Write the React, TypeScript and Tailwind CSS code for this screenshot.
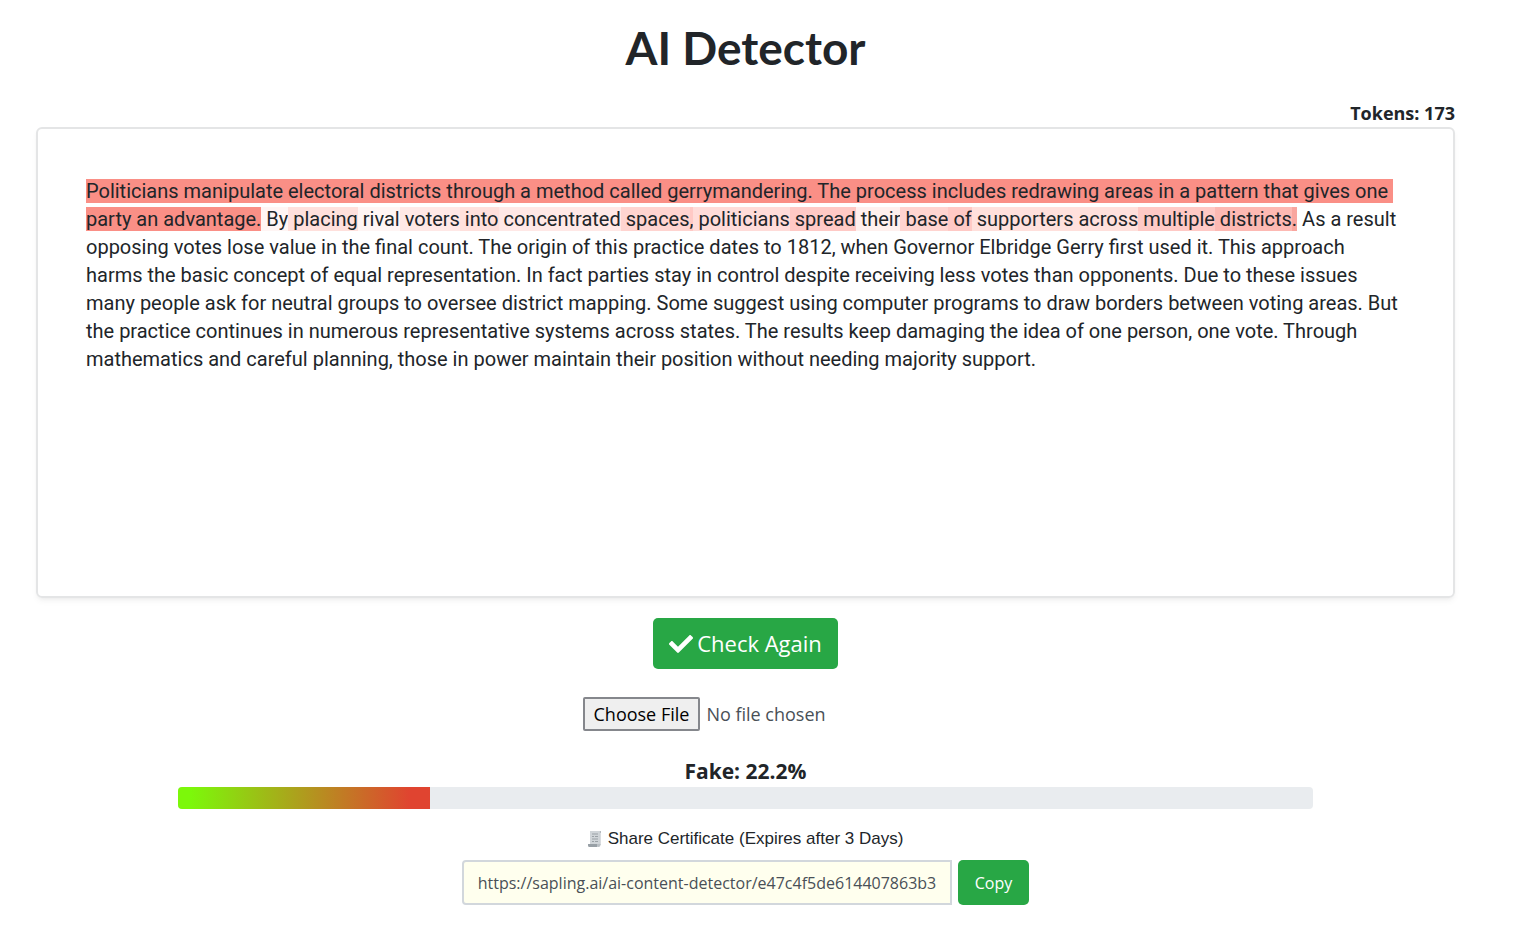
import { useState } from "react";

interface Token {
	text: string;
	className: string;
}

const TOKENS: Token[] = [
	{
		text: "Politicians manipulate electoral districts through a method called gerrymandering. The process includes redrawing areas in a pattern that gives one ",
		className: "bg-[#fa8f86]",
	},
	{ text: "party an advantage.", className: "bg-[#fa8f86]" },
	{ text: " By", className: "bg-[#fff5f4]" },
	{ text: " placing", className: "bg-[#ffe0dc]" },
	{ text: " rival", className: "bg-[#fff5f4]" },
	{ text: " voters", className: "bg-[#ffe8e6]" },
	{ text: " into", className: "bg-[#ffe0dc]" },
	{ text: " concentrated", className: "bg-[#ffe8e6]" },
	{ text: " spaces", className: "bg-[#ffd4d0]" },
	{ text: ",", className: "bg-[#ffc9c5]" },
	{ text: " politicians", className: "bg-[#ffdcd9]" },
	{ text: " spread", className: "bg-[#ffc9c5]" },
	{ text: " their", className: "bg-[#fff0ee]" },
	{ text: " base", className: "bg-[#ffd4d0]" },
	{ text: " of", className: "bg-[#ffc9c5]" },
	{ text: " supporters across", className: "bg-[#ffe0dc]" },
	{ text: " multiple", className: "bg-[#ffc9c5]" },
	{ text: " districts", className: "bg-[#fdb9b3]" },
	{ text: ".", className: "bg-[#f9a69f]" },
	{ text: " As a result ", className: "" },
	{
		text: "opposing votes lose value in the final count. The origin of this practice dates to 1812, when Governor Elbridge Gerry first used it. This approach harms the basic concept of equal representation. In fact parties stay in control despite receiving less votes than opponents. Due to these issues many people ask for neutral groups to oversee district mapping. Some suggest using computer programs to draw borders between voting areas. But the practice continues in numerous representative systems across states. The results keep damaging the idea of one person, one vote. Through mathematics and careful planning, those in power maintain their position without needing majority support.",
		className: "",
	},
];

const SHARE_URL = "https://sapling.ai/ai-content-detector/e47c4f5de614407863b3";

function ScoreBar({ score }: { score: number }) {
	return (
		<div className="w-4/5">
			<p id="score" className="text-center text-[21px] leading-8 font-bold">
				Fake: {score}%
			</p>
			<div
				role="progressbar"
				aria-labelledby="score"
				aria-valuenow={score}
				className="h-[22px] overflow-hidden rounded bg-[#e9ecef]"
			>
				<div
					className="h-full bg-linear-to-r/srgb from-[#7cf80a] from-5% to-[#e04430] to-92%"
					style={{ width: `${score}%` }}
				/>
			</div>
		</div>
	);
}

export default function App() {
	const [url, setUrl] = useState(SHARE_URL);

	return (
		<main className="flex flex-col items-center bg-white pt-4 pr-[61px] pb-6 pl-9 font-['Open_Sans',sans-serif] text-[#212529]">
			<h1 className="font-['Lato',sans-serif] text-[46px] leading-16 font-bold">
				AI Detector
			</h1>

			<p className="mt-5 self-end text-[18px] leading-[27px] font-bold">
				Tokens: 173
			</p>
			<div
				role="textbox"
				aria-label="Text to check"
				aria-multiline="true"
				tabIndex={0}
				className="min-h-[471px] w-full rounded-md border-2 border-[#e4e5e6] p-12 font-['Roboto',sans-serif] text-[20px] leading-7 whitespace-pre-wrap shadow-md shadow-black/5"
			>
				{TOKENS.map((t, i) => (
					<span key={i} className={t.className}>
						{t.text}
					</span>
				))}
			</div>

			<button
				type="button"
				className="mt-5 flex h-[51px] items-center gap-1 rounded-[5px] bg-[#28a745] px-4 text-[22px] text-white hover:bg-green-700"
			>
				<svg viewBox="0 0 512 512" fill="currentColor" className="size-6" aria-hidden="true">
					<path d="M173.898 439.404l-166.4-166.4c-9.997-9.997-9.997-26.206 0-36.204l36.203-36.204c9.997-9.998 26.207-9.998 36.204 0L192 312.69 432.095 72.596c9.997-9.997 26.207-9.997 36.204 0l36.203 36.204c9.997 9.997 9.997 26.206 0 36.204l-294.4 294.401c-9.998 9.997-26.207 9.997-36.204-.001z" />
				</svg>
				Check Again
			</button>

			<input
				type="file"
				aria-label="Choose a file to check"
				className="mt-7 w-[326px] text-[18px] leading-[30px] text-[#495057] file:mr-[6px] file:rounded-xs file:border-2 file:border-solid file:border-[#85878c] file:bg-[#efefef] file:px-[9px] file:text-black"
			/>

			<div className="mt-6 flex w-full justify-center">
				<ScoreBar score={22.2} />
			</div>

			<label
				htmlFor="share-url"
				className="mt-4 flex items-center gap-[6px] font-['Liberation_Sans',sans-serif] text-[17px] leading-7"
			>
				<svg viewBox="0 0 14 18" className="h-[18px] w-[14px]" aria-hidden="true">
					<path d="M2 1h9.5v13H11v2H2z" fill="#d0d5d9" />
					<path d="M11.5 1h1.5v2h-.5v12h-1z" fill="#b4babf" />
					<path d="M4 4h6M4 6.500h2M7 6.500h3M4 9h6M4 11.500h2M7 11.500h3" stroke="#9aa1a6" />
					<path d="M0 14h9v1.500q0 1 1 1.500H1.500Q0 17 0 15.500z" fill="#98a0a6" />
					<path d="M9 14h3.500v1q0 2-2 2T9 15z" fill="#b9bfc4" />
				</svg>
				Share Certificate (Expires after 3 Days)
			</label>
			<div className="mt-[7px] flex gap-[6px]">
				<input
					id="share-url"
					type="text"
					value={url}
					onChange={(e) => setUrl(e.target.value)}
					className="h-[45px] w-[490px] rounded-l border-2 border-[#d2d7dc] bg-[#ffffee] px-[14px] text-[16px] text-[#495057]"
				/>
				<button
					type="button"
					onClick={() => navigator.clipboard?.writeText(url)}
					className="h-[45px] rounded-[5px] bg-[#28a745] px-[17px] text-[16px] text-white hover:bg-green-700"
				>
					Copy
				</button>
			</div>
		</main>
	);
}
